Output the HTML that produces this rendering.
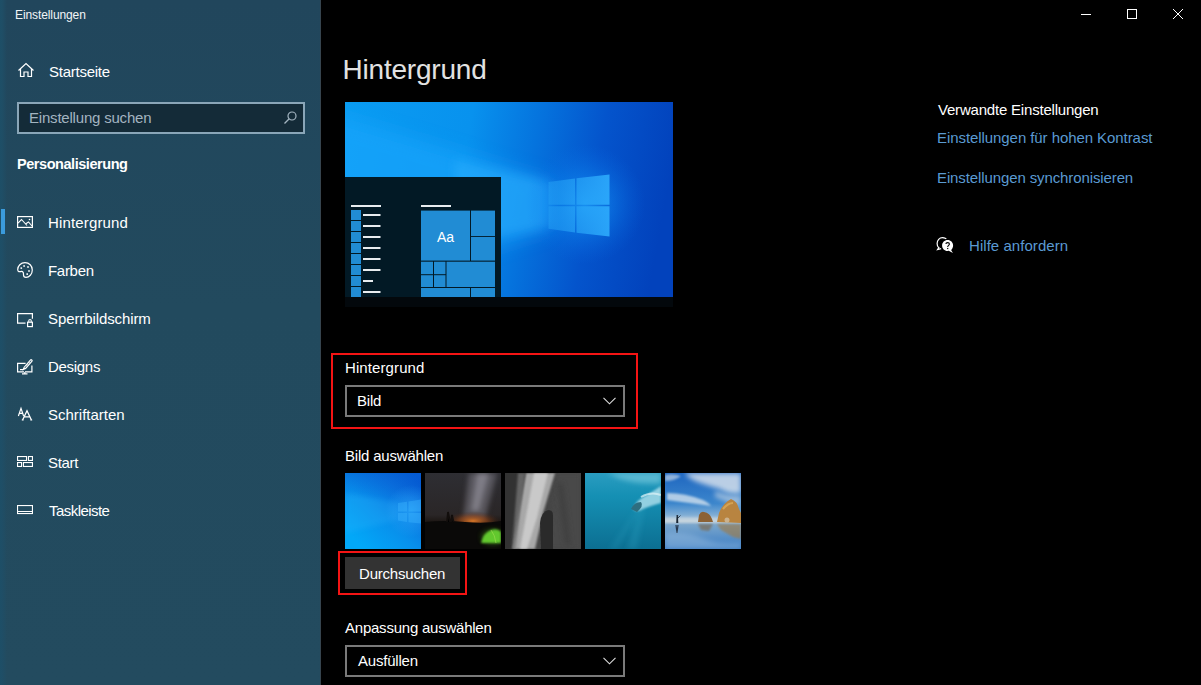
<!DOCTYPE html>
<html><head><meta charset="utf-8">
<style>
*{margin:0;padding:0;box-sizing:border-box}
html,body{width:1201px;height:685px;overflow:hidden;background:#000}
body{position:relative;font-family:"Liberation Sans",sans-serif;color:#fff}
.a{position:absolute;white-space:nowrap;line-height:1}
#side{position:absolute;left:0;top:0;width:321px;height:685px;background:linear-gradient(180deg,#21465c 0%,#224a5e 45%,#234b5f 100%)}
#side .edge{position:absolute;left:0;top:0;width:7px;height:685px;background:linear-gradient(90deg,#1e4f67 0%,#1f4e66 30%,rgba(34,74,94,0) 100%)}
.t15{font-size:15px;letter-spacing:-0.2px}
.nav{font-size:15px;color:#fff;letter-spacing:0px}
svg{position:absolute;overflow:visible}
.lnk{color:#5a9ad2}
</style></head><body>
<div id="side">
  <div class="edge"></div>
  <div style="position:absolute;left:320px;top:0;width:1px;height:685px;background:#36444e"></div>
  <div class="a" style="left:15px;top:8.5px;font-size:12px;color:#f2f5f7;letter-spacing:-0.1px">Einstellungen</div>
  <!-- home icon -->
  <svg style="left:17px;top:62px" width="18" height="16" viewBox="0 0 18 16"><path d="M1.5 8.5 L9 1.5 L16.5 8.5 M3.5 7 V14.5 H7 V10 H11 V14.5 H14.5 V7" fill="none" stroke="#fff" stroke-width="1.2"/></svg>
  <div class="a nav" style="left:49px;top:63.5px;letter-spacing:-0.25px">Startseite</div>
  <!-- search -->
  <div style="position:absolute;left:17px;top:102px;width:288px;height:32px;border:2px solid #8aa6b8;background:#142b38"></div>
  <div class="a t15" style="left:29px;top:110.3px;color:#a3b4c0">Einstellung suchen</div>
  <svg style="left:283px;top:111px" width="14" height="14" viewBox="0 0 14 14"><circle cx="9" cy="5" r="4" fill="none" stroke="#a3b4c0" stroke-width="1.2"/><path d="M6.2 7.8 L1.5 12.5" stroke="#a3b4c0" stroke-width="1.3"/></svg>
  <div class="a" style="left:17px;top:156.5px;font-size:14.5px;font-weight:700;letter-spacing:-0.45px">Personalisierung</div>
  <!-- selection indicator -->
  <div style="position:absolute;left:1px;top:209px;width:4px;height:25px;background:#3b9bdc"></div>
  <!-- nav icons -->
  <svg style="left:17px;top:216px" width="16" height="12" viewBox="0 0 16 12"><rect x="0.6" y="0.6" width="14.8" height="10.8" fill="none" stroke="#fff" stroke-width="1.2"/><path d="M1 7.2 L4.5 3.5 L10 9.5 M8.5 8 L11.5 6 L15 10" fill="none" stroke="#fff" stroke-width="1.1"/><circle cx="12.5" cy="3.5" r="0.8" fill="#fff"/></svg>
  <div class="a nav" style="left:48px;top:215.3px;letter-spacing:0.15px">Hintergrund</div>
  <svg style="left:17px;top:262px" width="16" height="16" viewBox="0 0 16 16"><path d="M8 0.7 C12.2 0.7 15.3 3.8 15.3 8 C15.3 12.2 12.2 15.3 9 15.3 C7.3 15.3 6.5 14.5 6.5 13 C6.5 11.5 6.8 10.2 5.5 9.6 C4.3 9.1 3 10 1.8 9.6 C0.9 9.3 0.7 8.6 0.7 7.6 C0.7 3.8 3.8 0.7 8 0.7 Z" fill="none" stroke="#fff" stroke-width="1.2"/><rect x="3.5" y="5.3" width="1.6" height="1.6" fill="#fff"/><rect x="6.3" y="3.2" width="1.6" height="1.6" fill="#fff"/><rect x="10.2" y="4.2" width="1.6" height="1.6" fill="#fff"/><rect x="11.2" y="8.2" width="1.6" height="1.6" fill="#fff"/><rect x="9.4" y="11.3" width="1.6" height="1.6" fill="#fff"/></svg>
  <div class="a nav" style="left:48px;top:263.3px;letter-spacing:-0.3px">Farben</div>
  <svg style="left:17px;top:312.5px" width="16" height="15" viewBox="0 0 16 15"><path d="M8.5 10.2 H0.6 V0.6 H15.4 V5.8" fill="none" stroke="#fff" stroke-width="1.2"/><rect x="10.6" y="9.2" width="4.8" height="4.4" fill="none" stroke="#fff" stroke-width="1.2"/><path d="M11.8 9.2 V7.5 C11.8 6.1 14.2 6.1 14.2 7.5 V9.2" fill="none" stroke="#fff" stroke-width="1.1"/></svg>
  <div class="a nav" style="left:48px;top:311.3px;letter-spacing:-0.1px">Sperrbildschirm</div>
  <svg style="left:17px;top:358px" width="16" height="17" viewBox="0 0 16 17"><path d="M7 13.9 H0.6 V5.4 H8.6 M14.9 7.5 V13.9 H8" fill="none" stroke="#fff" stroke-width="1.2"/><path d="M5 15.9 H10.5 M7.8 13.9 V15.9" stroke="#fff" stroke-width="1.2"/><path d="M6.3 11.3 L7.2 9.2 L13.6 1.8 C14.2 1.2 15.6 2.4 15 3.1 L8.6 10.4 Z" fill="none" stroke="#fff" stroke-width="1.2"/><path d="M3 11.6 H6.6" stroke="#fff" stroke-width="1.2"/><path d="M9.4 7.6 L10.6 6.3 M11.4 5.3 L12.6 4" stroke="#fff" stroke-width="0.9"/></svg>
  <div class="a nav" style="left:48px;top:359.3px;letter-spacing:-0.3px">Designs</div>
  <svg style="left:17px;top:407px" width="16" height="14" viewBox="0 0 16 14"><path d="M1.4 9 L4 1.3 L6.6 9 M2.3 6.3 H5.7" fill="none" stroke="#fff" stroke-width="1.2"/><path d="M5.6 13 L10 3.8 L14.4 13 M7.2 9.8 H12.8" fill="none" stroke="#fff" stroke-width="1.3"/><path d="M4.8 13 H6.6 M13.4 13 H15.2" stroke="#fff" stroke-width="1"/></svg>
  <div class="a nav" style="left:48px;top:407.3px">Schriftarten</div>
  <svg style="left:17px;top:456px" width="16" height="11" viewBox="0 0 16 11"><g fill="none" stroke="#fff" stroke-width="1.1"><rect x="0.55" y="0.55" width="9" height="3.9"/><rect x="11.45" y="0.55" width="4" height="3.9"/><rect x="0.55" y="6.55" width="4" height="3.9"/><rect x="6.45" y="6.55" width="9" height="3.9"/></g></svg>
  <div class="a nav" style="left:48px;top:455.3px;letter-spacing:-0.3px">Start</div>
  <svg style="left:17px;top:505px" width="16" height="10" viewBox="0 0 16 10"><rect x="0.55" y="0.55" width="14.9" height="8" fill="none" stroke="#fff" stroke-width="1.1"/><path d="M0.5 6.5 H15.5" stroke="#fff" stroke-width="1"/></svg>
  <div class="a nav" style="left:49px;top:503.3px;letter-spacing:-0.55px">Taskleiste</div>
</div>

<!-- window controls -->
<div style="position:absolute;left:1081px;top:14px;width:10px;height:1px;background:#fff"></div>
<div style="position:absolute;left:1127px;top:9px;width:10px;height:10px;border:1px solid #fff"></div>
<svg style="left:1172px;top:8px" width="12" height="12" viewBox="0 0 12 12"><path d="M1 1 L11 11 M11 1 L1 11" stroke="#fff" stroke-width="1"/></svg>

<!-- heading -->
<div class="a" style="left:342.5px;top:55.9px;font-size:28px;letter-spacing:-0.2px;color:#e2e2e2">Hintergrund</div>

<!-- preview placeholder -->
<svg id="preview" style="left:345px;top:102px" width="328" height="208" viewBox="0 0 328 208">
<defs>
<linearGradient id="wg" x1="0" y1="0" x2="328" y2="60" gradientUnits="userSpaceOnUse">
<stop offset="0" stop-color="#0a9cf2"/><stop offset="0.38" stop-color="#0892ee"/><stop offset="0.58" stop-color="#0574de"/><stop offset="0.78" stop-color="#0454cc"/><stop offset="1" stop-color="#0242bc"/>
</linearGradient>
<radialGradient id="glow" cx="240" cy="102" r="60" gradientUnits="userSpaceOnUse">
<stop offset="0" stop-color="#20a8ff" stop-opacity="0.7"/><stop offset="0.55" stop-color="#1090f8" stop-opacity="0.3"/><stop offset="1" stop-color="#0870e8" stop-opacity="0"/>
</radialGradient>
<linearGradient id="pane" x1="0" y1="0" x2="1" y2="0">
<stop offset="0" stop-color="#24a0f4" stop-opacity="0.5"/><stop offset="1" stop-color="#30b0ff" stop-opacity="0.85"/>
</linearGradient>
<clipPath id="pclip"><rect x="0" y="0" width="328" height="195"/></clipPath>
<filter id="pb" x="-30%" y="-60%" width="160%" height="220%"><feGaussianBlur stdDeviation="9"/></filter>
<filter id="pb2" x="-30%" y="-60%" width="160%" height="220%"><feGaussianBlur stdDeviation="5"/></filter>
</defs>
<g clip-path="url(#pclip)">
<rect x="0" y="0" width="328" height="195" fill="url(#wg)"/>
<path d="M-20 10 L205 78 L205 128 L-20 200 Z" fill="#1ea8ff" opacity="0.55" filter="url(#pb)"/>
<path d="M110 58 L205 80 L205 125 L110 142 Z" fill="#30b4ff" opacity="0.38" filter="url(#pb2)"/>
<rect x="0" y="0" width="328" height="195" fill="url(#glow)"/>
<path d="M264.5 72.6 L264.5 134.6" stroke="#3cc0ff" stroke-width="3" opacity="0.55" filter="url(#pb2)"/>
<path d="M203.5 80 L230 76.5 L230 102.8 L203.5 102.8 Z M231.5 76.3 L264.5 72.6 L264.5 102.8 L231.5 102.8 Z M203.5 104.3 L230 104.3 L230 130.5 L203.5 126.8 Z M231.5 104.3 L264.5 104.3 L264.5 134.6 L231.5 130.7 Z" fill="url(#pane)"/>
</g>
<rect x="0" y="75" width="156" height="120" fill="#021925"/>
<rect x="0" y="195" width="328" height="10" fill="#03080c"/>
<g fill="#218cd4">
<rect x="6" y="108" width="10" height="10"/><rect x="6" y="119" width="10" height="10"/><rect x="6" y="130" width="10" height="10"/><rect x="6" y="141" width="10" height="10"/><rect x="6" y="152" width="10" height="10"/><rect x="6" y="163" width="10" height="10"/><rect x="6" y="174" width="10" height="10"/><rect x="6" y="185" width="10" height="10"/>
<rect x="76" y="108.6" width="49" height="50"/>
<rect x="126" y="108.6" width="24" height="25.5"/><rect x="126" y="135" width="24" height="23.6"/>
<rect x="76" y="159.7" width="12" height="12.5"/><rect x="89" y="159.7" width="11.5" height="12.5"/>
<rect x="76" y="173.2" width="12" height="11.8"/><rect x="89" y="173.2" width="11.5" height="11.8"/>
<rect x="101.5" y="159.7" width="48.5" height="25.3"/>
<rect x="76" y="186" width="49" height="9"/><rect x="126" y="186" width="24" height="9"/>
</g>
<g fill="#e8ecef">
<rect x="6" y="103" width="30" height="2"/><rect x="76" y="103" width="30" height="2"/>
<rect x="18" y="112" width="17.5" height="2"/><rect x="18" y="123" width="17.5" height="2"/><rect x="18" y="134" width="17.5" height="2"/><rect x="18" y="145" width="17.5" height="2"/><rect x="18" y="156" width="17.5" height="2"/><rect x="18" y="167" width="17.5" height="2"/><rect x="18" y="178" width="10" height="2"/><rect x="18" y="189" width="17.5" height="2"/>
</g>
<text x="100.5" y="139.5" text-anchor="middle" font-family="Liberation Sans" font-size="14" fill="#fff">Aa</text>
</svg>

<!-- Hintergrund dropdown -->
<div style="position:absolute;left:331px;top:353px;width:307px;height:76px;border:2px solid #f41414"></div>
<div class="a t15" style="left:345px;top:360.1px;letter-spacing:0.1px">Hintergrund</div>
<div style="position:absolute;left:345px;top:385px;width:280px;height:32px;border:2px solid #7a7a7a"></div>
<div class="a t15" style="left:357px;top:393px">Bild</div>
<svg style="left:603px;top:397px" width="13" height="8" viewBox="0 0 13 8"><path d="M0.5 0.8 L6.5 6.8 L12.5 0.8" fill="none" stroke="#ddd" stroke-width="1.1"/></svg>

<div class="a t15" style="left:345px;top:448.1px">Bild auswählen</div>
<svg style="left:345px;top:473px" width="396" height="76" viewBox="0 0 396 76">
<defs>
<filter id="b1" x="-50%" y="-50%" width="200%" height="200%"><feGaussianBlur stdDeviation="1.2"/></filter>
<filter id="b2" x="-50%" y="-50%" width="200%" height="200%"><feGaussianBlur stdDeviation="2.5"/></filter>
<filter id="b3" x="-50%" y="-50%" width="200%" height="200%"><feGaussianBlur stdDeviation="0.6"/></filter>
<clipPath id="c1"><rect x="0" y="0" width="76" height="76"/></clipPath>
<clipPath id="c2"><rect x="80" y="0" width="76" height="76"/></clipPath>
<clipPath id="c3"><rect x="160" y="0" width="76" height="76"/></clipPath>
<clipPath id="c4"><rect x="240" y="0" width="76" height="76"/></clipPath>
<clipPath id="c5"><rect x="320" y="0" width="76" height="76"/></clipPath>
<linearGradient id="t1g" x1="0.1" y1="0.85" x2="0.9" y2="0"><stop offset="0" stop-color="#02a8f8"/><stop offset="0.4" stop-color="#0890ec"/><stop offset="0.75" stop-color="#0a6edc"/><stop offset="1" stop-color="#0456d0"/></linearGradient>
<linearGradient id="t1top" x1="0" y1="0" x2="0" y2="1"><stop offset="0" stop-color="#0660d4" stop-opacity="0.45"/><stop offset="0.35" stop-color="#0660d4" stop-opacity="0"/></linearGradient>
<radialGradient id="t1glow" cx="66" cy="38" r="26" gradientUnits="userSpaceOnUse"><stop offset="0" stop-color="#30b0ff" stop-opacity="0.6"/><stop offset="1" stop-color="#30b0ff" stop-opacity="0"/></radialGradient>
<linearGradient id="t2g" x1="0" y1="0" x2="0" y2="1"><stop offset="0" stop-color="#2e2e33"/><stop offset="0.55" stop-color="#2a2627"/><stop offset="0.66" stop-color="#1a1410"/><stop offset="0.7" stop-color="#0b0a0a"/><stop offset="1" stop-color="#070707"/></linearGradient>
<radialGradient id="t2h" cx="128" cy="48" r="28" gradientTransform="translate(128 48) scale(1 0.35) translate(-128 -48)" gradientUnits="userSpaceOnUse"><stop offset="0" stop-color="#e07a28" stop-opacity="0.95"/><stop offset="0.5" stop-color="#9a4a1c" stop-opacity="0.6"/><stop offset="1" stop-color="#3a2018" stop-opacity="0"/></radialGradient>
<linearGradient id="t3g" x1="0" y1="0" x2="1" y2="0"><stop offset="0" stop-color="#3e3e3e"/><stop offset="0.5" stop-color="#555"/><stop offset="1" stop-color="#4a4a4a"/></linearGradient>
<linearGradient id="t4g" x1="0" y1="0" x2="0" y2="1"><stop offset="0" stop-color="#2a9cc0"/><stop offset="0.3" stop-color="#1590b4"/><stop offset="1" stop-color="#0c6f92"/></linearGradient>
<linearGradient id="t5s" x1="0" y1="0" x2="0" y2="1"><stop offset="0" stop-color="#1e66c0"/><stop offset="0.4" stop-color="#3c86cc"/><stop offset="0.58" stop-color="#8cb4d6"/><stop offset="0.63" stop-color="#b8ccd8"/><stop offset="0.68" stop-color="#7aa6cc"/><stop offset="1" stop-color="#3a7cc4"/></linearGradient>
</defs>
<g clip-path="url(#c1)">
<rect x="0" y="0" width="76" height="76" fill="url(#t1g)"/>
<rect x="0" y="0" width="76" height="76" fill="url(#t1top)"/>
<rect x="0" y="0" width="76" height="76" fill="url(#t1glow)"/>
<path d="M0 20 L53 30 L53 47 L0 60 Z" fill="#40c0ff" opacity="0.18" filter="url(#b2)"/>
<g fill="#3cb4ff" opacity="0.42"><path d="M53 30 L62 28.7 L62 38.5 L53 38.5 Z"/><path d="M63.5 28.5 L80 26 L80 38.5 L63.5 38.5 Z"/><path d="M53 40 L62 40 L62 49 L53 47.5 Z"/><path d="M63.5 40 L80 40 L80 51 L63.5 49.2 Z"/></g>
</g>
<g clip-path="url(#c2)">
<rect x="80" y="0" width="76" height="76" fill="url(#t2g)"/>
<path d="M124 0 L152 0 L140 46 L118 46 Z" fill="#7a7882" opacity="0.55" filter="url(#b2)"/>
<path d="M132 0 L144 0 L134 38 L126 38 Z" fill="#aeacb8" opacity="0.45" filter="url(#b2)"/>
<rect x="80" y="30" width="76" height="30" fill="url(#t2h)"/>
<path d="M80 49 Q100 47 120 49 T156 48 L156 76 L80 76 Z" fill="#0a0908"/>
<path d="M102 49 L103 39 L105 49 M106 49 L107 42 L108.5 49" stroke="#120e0c" stroke-width="1.8"/>
<ellipse cx="148" cy="64" rx="12" ry="8" fill="#3a7a18" opacity="0.5" filter="url(#b2)"/><path d="M136 70 Q138 60 146 57 Q153 55 156 59 L156 70 Z" fill="#62c82e" filter="url(#b1)"/>
<path d="M146 57 Q150 62 151 70" stroke="#a0e050" stroke-width="1" fill="none" opacity="0.6"/>
</g>
<g clip-path="url(#c3)">
<rect x="160" y="0" width="76" height="76" fill="#454545"/>
<path d="M150 -5 L182 -5 L168 80 L150 80 Z" fill="#333" filter="url(#b2)"/>
<path d="M210 0 L236 0 L236 76 L204 76 Z" fill="#4a4a4a" filter="url(#b2)"/>
<path d="M212 10 L218 10 L226 72 L220 72 Z" fill="#3a3a3a" opacity="0.6" filter="url(#b2)"/>
<path d="M181 0 L210 0 L198 40 L190 76 L168 76 Z" fill="#a8a8a8" filter="url(#b1)"/>
<path d="M189 0 L203 0 L192 45 L182 76 L175 76 Z" fill="#cfcfcf" opacity="0.85" filter="url(#b1)"/>
<path d="M173 0 L180 0 L171 76 L167 76 Z" fill="#7a7a7a" opacity="0.7" filter="url(#b1)"/>
<path d="M196 76 L195 50 Q196 39 203 37 Q208 37 208 42 L208 76 Z" fill="#2c2c2c" filter="url(#b3)"/>
</g>
<g clip-path="url(#c4)">
<rect x="240" y="0" width="76" height="76" fill="url(#t4g)"/>
<path d="M262 0 L316 0 L316 10 Q295 12 275 6 Z" fill="#7accdf" opacity="0.6" filter="url(#b2)"/>
<path d="M282 76 L296 30 L300 30 L292 76 Z" fill="#30a8c8" opacity="0.25" filter="url(#b2)"/>
<path d="M264 76 L292 35 L295 36 L272 76 Z" fill="#30a8c8" opacity="0.2" filter="url(#b2)"/>
<path d="M288 36 Q292 26 302 22 Q310 17 316 13 L316 30 Q305 33 298 36 Q292 40 288 36 Z" fill="#a8dcea" opacity="0.85" filter="url(#b1)"/>
<path d="M296 24 Q306 18 316 22" stroke="#e0f4f8" stroke-width="2" fill="none" opacity="0.7" filter="url(#b3)"/>
<path d="M286 36 Q289 29 296 29 Q299 33 292 39 Z" fill="#2f6e80" filter="url(#b3)"/>
</g>
<g clip-path="url(#c5)">
<rect x="320" y="0" width="76" height="76" fill="url(#t5s)"/>
<path d="M340 0 L396 0 L396 20 Q385 22 375 16 Q360 12 350 8 Q342 4 340 0 Z" fill="#dfe6ee" opacity="0.8" filter="url(#b2)"/>
<path d="M320 2 Q328 0 336 3 Q330 8 320 8 Z" fill="#d8e2ec" opacity="0.6" filter="url(#b1)"/>
<path d="M322 20 Q340 20 358 27 Q364 30 366 33 Q345 30 322 27 Z" fill="#e4ecf2" opacity="0.7" filter="url(#b1)"/>
<path d="M370 18 Q385 24 396 22 L396 34 Q384 30 370 24 Z" fill="#d8e0e8" opacity="0.6" filter="url(#b2)"/>
<rect x="320" y="44" width="76" height="6" fill="#d4dde4" opacity="0.5" filter="url(#b1)"/>
<path d="M353 49 L354 42 Q356 38 359 39 Q365 40 367 46 L368 49 Z" fill="#8c6236" filter="url(#b3)"/>
<path d="M372 49 L374 40 Q378 30 386 26 Q392 28 394 36 L396 40 L396 50 Z" fill="#b88440" filter="url(#b3)"/>
<path d="M378 36 Q383 30 388 30" stroke="#e8b860" stroke-width="2" opacity="0.6" fill="none" filter="url(#b3)"/>
<ellipse cx="382" cy="47" rx="2.5" ry="2.5" fill="#d8d0c0" opacity="0.6"/>
<path d="M353 51 L368 51 L364 58 L356 57 Z" fill="#7a6040" opacity="0.6" filter="url(#b1)"/>
<path d="M372 51 L396 51 L396 66 L388 64 L376 57 Z" fill="#a07840" opacity="0.6" filter="url(#b1)"/>
<path d="M331.2 50 L331.5 44 L333 44 L333.3 50 Z" fill="#1a2634"/><circle cx="332.3" cy="43" r="1" fill="#1a2634"/><path d="M333 45 L335.5 42.5" stroke="#1a2634" stroke-width="0.8"/>
<path d="M331 52 L332 60 L333 52" fill="none" stroke="#24344a" stroke-width="1.2"/>
<path d="M320 60 Q340 58 360 66 Q375 72 396 70 L396 76 L320 76 Z" fill="#9cc0e0" opacity="0.45" filter="url(#b2)"/>
</g>
</svg>

<div style="position:absolute;left:338px;top:551px;width:129px;height:44px;border:2px solid #f41414"></div>
<div style="position:absolute;left:345px;top:557px;width:115px;height:32px;background:#333"></div>
<div class="a t15" style="left:359px;top:566.3px">Durchsuchen</div>

<div class="a t15" style="left:345px;top:620px;letter-spacing:-0.23px">Anpassung auswählen</div>
<div style="position:absolute;left:345px;top:645px;width:280px;height:32px;border:2px solid #7a7a7a"></div>
<div class="a t15" style="left:358px;top:652.8px">Ausfüllen</div>
<svg style="left:603px;top:657px" width="13" height="8" viewBox="0 0 13 8"><path d="M0.5 0.8 L6.5 6.8 L12.5 0.8" fill="none" stroke="#ddd" stroke-width="1.1"/></svg>

<!-- right column -->
<div class="a t15" style="left:938px;top:101.7px">Verwandte Einstellungen</div>
<div class="a t15 lnk" style="left:937px;top:130.1px;letter-spacing:-0.07px">Einstellungen für hohen Kontrast</div>
<div class="a t15 lnk" style="left:937px;top:170px;letter-spacing:-0.11px">Einstellungen synchronisieren</div>
<svg style="left:936px;top:236px" width="18" height="18" viewBox="0 0 18 18"><path d="M2.6 11.6 C1.6 10.6 1.1 9.2 1.1 7.6 C1.1 4.1 3.5 1.6 6.4 1.6 C8.6 1.6 10.3 2.8 11 4.4 M3.2 11.2 L1.6 13.6 L5.2 12.6" fill="none" stroke="#fff" stroke-width="1.2"/><circle cx="11.6" cy="9.4" r="6.7" fill="#000"/><path d="M11.6 3.9 C14.7 3.9 17.1 6.3 17.1 9.4 C17.1 11.3 16.3 12.9 15.1 13.9 L16.9 16.9 L12.7 14.8 C12.3 14.9 12 14.9 11.6 14.9 C8.5 14.9 6.1 12.5 6.1 9.4 C6.1 6.3 8.5 3.9 11.6 3.9 Z" fill="#fff"/><path d="M9.9 8.1 C9.9 6.1 13.4 6.1 13.4 8.1 C13.4 9.4 11.7 9.5 11.7 10.9" fill="none" stroke="#000" stroke-width="1.1"/><rect x="11.1" y="11.9" width="1.2" height="1.2" fill="#000"/></svg>
<div class="a t15 lnk" style="left:969px;top:237.9px;letter-spacing:0.05px">Hilfe anfordern</div>
</body></html>
